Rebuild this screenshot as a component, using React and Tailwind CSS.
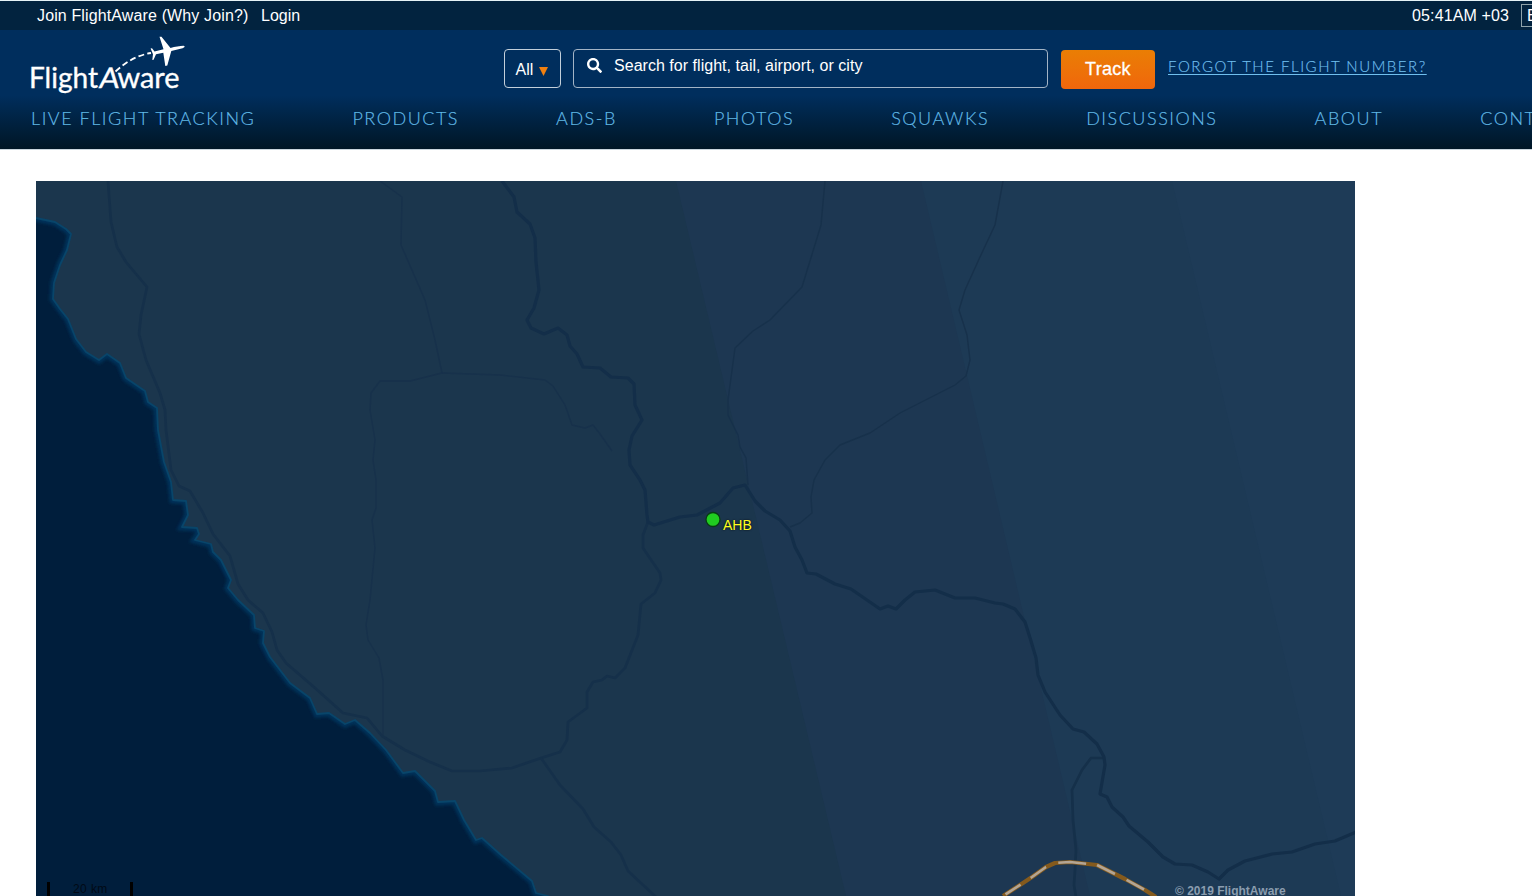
import { FaSearch } from "react-icons/fa";

const navItems = [
  "Live Flight Tracking",
  "Products",
  "ADS-B",
  "Photos",
  "Squawks",
  "Discussions",
  "About",
  "Contact",
];

const COAST =
  "M30 217 L36 218 L55 222 L66 229 L71 234 L67 250 L60 265 L54 283 L53 299 L60 309 L68 319 L76 339 L86 352 L99 360 L107 354 L120 363 L126 378 L145 391 L148 402 L157 408 L158 430 L164 462 L171 482 L173 500 L186 501 L188 515 L182 527 L197 528 L199 534 L195 540 L211 544 L213 552 L221 560 L231 580 L228 588 L238 600 L254 615 L255 628 L264 631 L263 643 L270 657 L290 683 L310 698 L317 714 L329 713 L345 724 L355 720 L370 733 L386 750 L403 773 L415 771 L435 791 L438 802 L455 801 L464 820 L476 840 L482 838 L501 855 L532 881 L536 893 L548 896 L552 904";

const mainRoads = [
  "M108 181 L111 222 L117 247 L126 262 L147 287 L141 315 L139 334 L146 360 L160 393 L165 410 L166 430 L171 470 L179 486 L190 491 L203 513 L213 534 L230 556 L238 584 L248 600 L263 613 L272 632 L277 650 L286 663 L315 688 L343 713 L367 718 L382 736 L405 750 L430 762 L452 771 L480 771 L512 768 L541 758",
  "M541 758 L560 752 L567 740 L568 722 L587 708 L587 692 L593 682 L602 680 L607 676 L615 678 L625 668 L638 635 L641 604 L655 593 L661 580 L660 573 L643 548 L643 535 L648 522",
  "M541 758 L560 785 L583 809 L594 827 L611 842 L621 855 L628 871 L642 884 L656 897",
  "M1104 758 L1091 758 L1082 770 L1072 790 L1073 820 L1076 850 L1075 870 L1074 885 L1076 897",
];

const highways = [
  "M502 181 L514 197 L517 212 L530 224 L535 238 L536 262 L539 290 L534 308 L527 320 L531 328 L544 334 L558 328 L567 335 L570 346 L577 354 L583 367 L600 368 L611 377 L628 378 L634 384 L635 405 L642 420 L632 436 L629 450 L630 465 L640 480 L645 490 L647 515 L648 522 L654 525 L680 517 L697 515 L720 503 L733 488 L745 485 L755 501 L765 511 L780 520 L790 531 L795 547 L802 560 L807 573 L816 574 L835 584 L851 589 L880 609 L888 606 L896 609 L905 600 L915 592 L935 590 L955 598 L968 598 L975 598 L995 603 L1003 604 L1015 609 L1025 622 L1031 641 L1036 658 L1038 675 L1045 692 L1060 715 L1073 729 L1084 732 L1097 744 L1104 757 L1105 765 L1100 794 L1107 797 L1112 807 L1123 817 L1129 826 L1148 842 L1163 857 L1175 864 L1192 865 L1208 872 L1219 879 L1228 870 L1245 861 L1272 854 L1292 852 L1315 844 L1335 841 L1356 832",
];

const minorRoads = [
  "M380 181 L402 197 L401 245 L425 300 L435 340 L442 373 L410 381 L380 381 L371 393 L370 410 L375 440 L373 460 L376 480 L376 508 L372 520 L375 548 L370 600 L366 625 L368 640 L379 658 L383 680 L383 735",
  "M442 373 L500 375 L545 380 L553 386 L565 405 L572 425 L585 428 L593 425 L600 434 L612 451",
  "M825 181 L821 225 L802 287 L770 320 L753 331 L735 348 L728 400 L728 415 L738 435 L740 447 L746 458 L748 485",
  "M1003 181 L995 225 L980 257 L965 290 L959 310 L967 335 L970 360 L966 376 L955 385 L900 413 L870 433 L840 445 L825 460 L814 480 L811 497 L812 513 L800 523 L790 527",
];

const BORDER =
  "M1003 896 L1023 883 L1032 877 L1046 867 L1055 863 L1070 862 L1097 865 L1115 874 L1125 879 L1145 890 L1156 897";

const Logo = () => (
  <svg width="156" height="60" viewBox="30 36 156 60" className="block shrink-0" fill="#fff">
    <g fontFamily="Lato, sans-serif" fontSize="28.5" stroke="#fff" strokeWidth="0.35">
      <text x="29" y="87.5" textLength="69" lengthAdjust="spacingAndGlyphs">Flight</text>
      <text transform="translate(98.5 87.5) skewX(-6)" textLength="20" lengthAdjust="spacingAndGlyphs">A</text>
      <text x="117.5" y="87.5" textLength="62" lengthAdjust="spacingAndGlyphs">ware</text>
    </g>
    <path d="M115.5 71.5 Q132 56 151 53" fill="none" stroke="#fff" strokeWidth="1.8" strokeDasharray="6 3.2" />
    {/* plane */}
    <path d="M154.5 51.5 L163.5 49.3 L159.5 36.8 L161.5 36.8 L170.5 48 C175 46.8 180 45.8 183.5 45.8 C185.6 46.2 184.5 47.7 182.5 48.2 L171.3 51 L167.3 65.6 L165.3 66 L163.3 52.8 L156 54.3 L153.6 59.8 L152.3 60 L153 54.2 L150.6 48.4 L152 48.3 Z" />
  </svg>
);

const TopBar = () => (
  <div className="h-[29px] shrink-0 bg-[#02233f] flex items-center pl-[37px] text-[16px] text-white whitespace-nowrap">
    <a href="#join" className="w-[224px] tracking-[0.13px]">Join FlightAware (Why Join?)</a>
    <a href="#login">Login</a>
    <span className="ml-auto tracking-[0.12px]">05:41AM +03</span>
    <div className="ml-3 w-[11px] h-[23px] overflow-hidden border border-r-0 border-[#8fa3ab] pl-[5px] leading-[21px]">
      English (USA)
    </div>
  </div>
);

const SearchRow = () => (
  <div className="h-[70px] flex items-start pl-[30px] whitespace-nowrap">
    <div className="w-[474px] pt-[6px]">
      <Logo />
    </div>
    <button className="mt-[19px] w-[57px] h-[39px] shrink-0 rounded-[4px] border border-[#c3cfda] text-white text-[16px] flex items-center justify-center gap-[6px] pt-[2px] pr-px">
      All
      <svg width="9" height="9" viewBox="0 0 9 9" className="mt-[3px]">
        <path d="M0 0 H9 L4.5 9 Z" fill="#f08010" />
      </svg>
    </button>
    <div className="ml-3 mt-[19px] w-[475px] h-[39px] shrink-0 rounded-[4px] border border-[#a3b4c6] text-white flex items-start pl-[13px]">
      <FaSearch size={15} className="mt-[8px]" />
      <span className="ml-[12px] mt-[5px] text-[16px] leading-[22px] tracking-[0.03px]">Search for flight, tail, airport, or city</span>
    </div>
    <button className="ml-[13px] mt-[20px] w-[94px] h-[39px] shrink-0 rounded-[4px] bg-linear-to-b from-[#ea7e04] to-[#f0660c] text-white text-[18px] tracking-[0.3px] [-webkit-text-stroke:0.3px_#fff]">
      Track
    </button>
    <a
      href="#forgot"
      className="ml-[13px] mt-[24px] font-[Lato,sans-serif] font-light text-[15px] leading-[24px] tracking-[1.53px] uppercase underline underline-offset-2 text-[#70bfee] [-webkit-text-stroke:0.15px_#70bfee]"
    >
      Forgot the flight number?
    </a>
  </div>
);

const Map = () => (
  <div className="relative ml-9 mt-[31px] w-[1319px] h-[715px] overflow-hidden">
    <svg width="1319" height="715" viewBox="36 181 1319 715" className="block">
      <rect x="36" y="181" width="1319" height="715" fill="#1b364d" />
      <path d="M676 181 L846 896 H1356 V181 Z" fill="#1d3752" />
      <path d="M921 181 L1090 896 H1356 V181 Z" fill="#1d3a55" />
      <path d="M1172 181 L1341 896 H1356 V181 Z" fill="#1e3b57" />

      <clipPath id="sea">
        <path d={`${COAST} H30 Z`} />
      </clipPath>
      <filter id="soft">
        <feGaussianBlur stdDeviation="1.5" />
      </filter>
      <path d={`${COAST} H30 Z`} fill="#001e3c" />
      <g clipPath="url(#sea)">
        <path d={COAST} fill="none" stroke="#00335a" strokeWidth="7" filter="url(#soft)" />
      </g>
      <path d={COAST} fill="none" stroke="#08456a" strokeWidth="1.8" strokeLinejoin="round" />

      <g fill="none" strokeLinejoin="round">
        {minorRoads.map((d) => (
          <path key={d} d={d} stroke="#17314b" strokeWidth="1.4" />
        ))}
        {mainRoads.map((d) => (
          <path key={d} d={d} stroke="#15304a" strokeWidth="2.7" />
        ))}
        {highways.map((d) => (
          <path key={d} d={d} stroke="#132e49" strokeWidth="3.2" />
        ))}
        <path d={BORDER} stroke="#845a1d" strokeWidth="4.2" />
        <path d={BORDER} stroke="#b3a594" strokeWidth="2.6" strokeDasharray="0 3 18 12 19 13 28 11 20 13 20 20" />
      </g>

      <circle cx="713" cy="519.5" r="7" fill="#20cc20" stroke="#083c14" strokeWidth="1.3" />
      <path d="M48.5 882 V896 M131.5 882 V896" stroke="#000" strokeWidth="3" />
    </svg>
    <span className="absolute left-[687px] top-[336px] text-[14px] leading-4 text-[#ffff20] [text-shadow:0_0_2px_#000]">
      AHB
    </span>
    <span className="absolute left-[37px] top-[700px] text-[12px] leading-4 tracking-[0.4px] text-[#000a16]">20 km</span>
    <span className="absolute left-[1139px] top-[702px] text-[12px] leading-4 font-bold text-[#8b9daf] whitespace-nowrap">
      © 2019 FlightAware
    </span>
  </div>
);

export default function App() {
  return (
    <div className="w-full h-[896px] overflow-hidden bg-white font-['Liberation_Sans',Arial,sans-serif]">
      <header className="h-[150px] overflow-hidden border-t border-b border-t-[#e6f3f7] border-b-[#c9d5de] flex flex-col">
        <TopBar />
        <div className="flex-1 bg-linear-to-b from-[#002e5d] from-0% via-[#002e5d] via-55% to-[#001626] to-100%">
          <SearchRow />
          <nav className="flex gap-[97.1px] pl-[31px] pt-[6px] font-[Lato,sans-serif] font-light text-[18px] leading-[24px] tracking-[1.52px] uppercase text-[#62bbe8] whitespace-nowrap [-webkit-text-stroke:0.15px_#62bbe8]">
            {navItems.map((item) => (
              <a key={item} href={`#${item}`}>
                {item}
              </a>
            ))}
          </nav>
        </div>
      </header>
      <Map />
    </div>
  );
}
